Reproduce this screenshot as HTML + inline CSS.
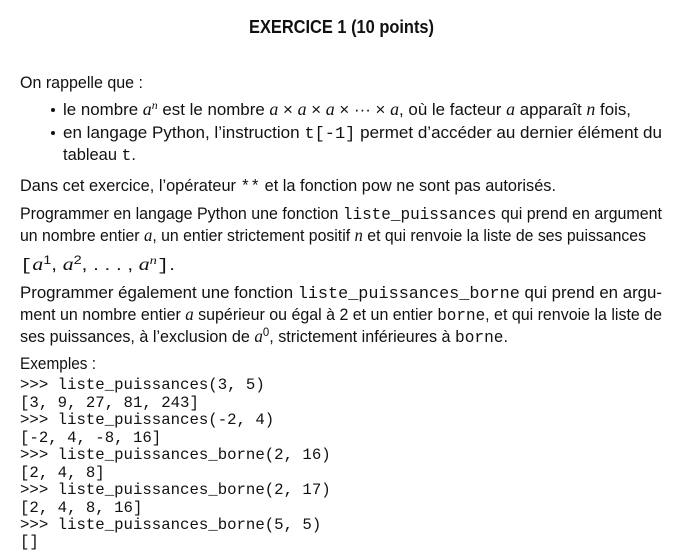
<!DOCTYPE html>
<html><head><meta charset="utf-8"><style>
html,body{margin:0;padding:0;background:#fff;}
svg{display:block}
text{font-family:"Liberation Sans",sans-serif;font-size:17px;fill:#111}
.m{font-family:"Liberation Mono",monospace}
.i{font-family:"Liberation Serif",serif;font-style:italic;font-size:18px}
.s{font-size:12px !important}
.c{font-family:"Liberation Mono",monospace;font-size:15.7px}
</style></head><body>
<svg width="684" height="556" xmlns="http://www.w3.org/2000/svg">
<text x="249" y="33" font-weight="bold" style="font-size:18px" textLength="185" lengthAdjust="spacingAndGlyphs">EXERCICE 1 (10 points)</text>
<text x="20" y="88" textLength="123" lengthAdjust="spacingAndGlyphs">On rappelle que :</text>
<circle cx="53" cy="110" r="2" fill="#111"/>
<text x="63" y="115" textLength="568" lengthAdjust="spacingAndGlyphs">le nombre <tspan class="i">a</tspan><tspan class="i s" dy="-6">n</tspan><tspan dy="6"> est le nombre </tspan><tspan class="i">a</tspan> × <tspan class="i">a</tspan> × <tspan class="i">a</tspan> × ··· × <tspan class="i">a</tspan>, où le facteur <tspan class="i">a</tspan> apparaît <tspan class="i">n</tspan> fois,</text>
<circle cx="53" cy="133" r="2" fill="#111"/>
<text x="63" y="138" textLength="599" lengthAdjust="spacingAndGlyphs">en langage Python, l’instruction <tspan class="m">t[-1]</tspan> permet d’accéder au dernier élément du</text>
<text x="63" y="160" textLength="73" lengthAdjust="spacingAndGlyphs">tableau <tspan class="m">t</tspan>.</text>
<text x="20" y="191" textLength="536" lengthAdjust="spacingAndGlyphs">Dans cet exercice, l’opérateur <tspan class="m">**</tspan> et la fonction pow ne sont pas autorisés.</text>
<text x="20" y="219" textLength="642" lengthAdjust="spacingAndGlyphs">Programmer en langage Python une fonction <tspan class="m">liste_puissances</tspan> qui prend en argument</text>
<text x="20" y="241" textLength="626" lengthAdjust="spacingAndGlyphs">un nombre entier <tspan class="i">a</tspan>, un entier strictement positif <tspan class="i">n</tspan> et qui renvoie la liste de ses puissances</text>
<text x="20" y="270" textLength="155" lengthAdjust="spacingAndGlyphs"><tspan class="m">[</tspan><tspan class="i">a</tspan><tspan class="s" dy="-6">1</tspan><tspan dy="6">, </tspan><tspan class="i">a</tspan><tspan class="s" dy="-6">2</tspan><tspan dy="6">,  . . . , </tspan><tspan class="i">a</tspan><tspan class="i s" dy="-6">n</tspan><tspan dy="6" class="m">]</tspan>.</text>
<text x="20" y="298" textLength="642" lengthAdjust="spacingAndGlyphs">Programmer également une fonction <tspan class="m">liste_puissances_borne</tspan> qui prend en argu-</text>
<text x="20" y="320" textLength="642" lengthAdjust="spacingAndGlyphs">ment un nombre entier <tspan class="i">a</tspan> supérieur ou égal à 2 et un entier <tspan class="m">borne</tspan>, et qui renvoie la liste de</text>
<text x="20" y="342" textLength="488" lengthAdjust="spacingAndGlyphs">ses puissances, à l’exclusion de <tspan class="i">a</tspan><tspan class="s" dy="-6">0</tspan><tspan dy="6">, strictement inférieures à </tspan><tspan class="m">borne</tspan>.</text>
<text x="20" y="369" textLength="76" lengthAdjust="spacingAndGlyphs">Exemples :</text>
<text class="c" x="20" y="389">&gt;&gt;&gt; liste_puissances(3, 5)</text>
<text class="c" x="20" y="407">[3, 9, 27, 81, 243]</text>
<text class="c" x="20" y="424">&gt;&gt;&gt; liste_puissances(-2, 4)</text>
<text class="c" x="20" y="442">[-2, 4, -8, 16]</text>
<text class="c" x="20" y="459">&gt;&gt;&gt; liste_puissances_borne(2, 16)</text>
<text class="c" x="20" y="477">[2, 4, 8]</text>
<text class="c" x="20" y="494">&gt;&gt;&gt; liste_puissances_borne(2, 17)</text>
<text class="c" x="20" y="512">[2, 4, 8, 16]</text>
<text class="c" x="20" y="529">&gt;&gt;&gt; liste_puissances_borne(5, 5)</text>
<text class="c" x="20" y="546">[]</text>
</svg>
</body></html>
